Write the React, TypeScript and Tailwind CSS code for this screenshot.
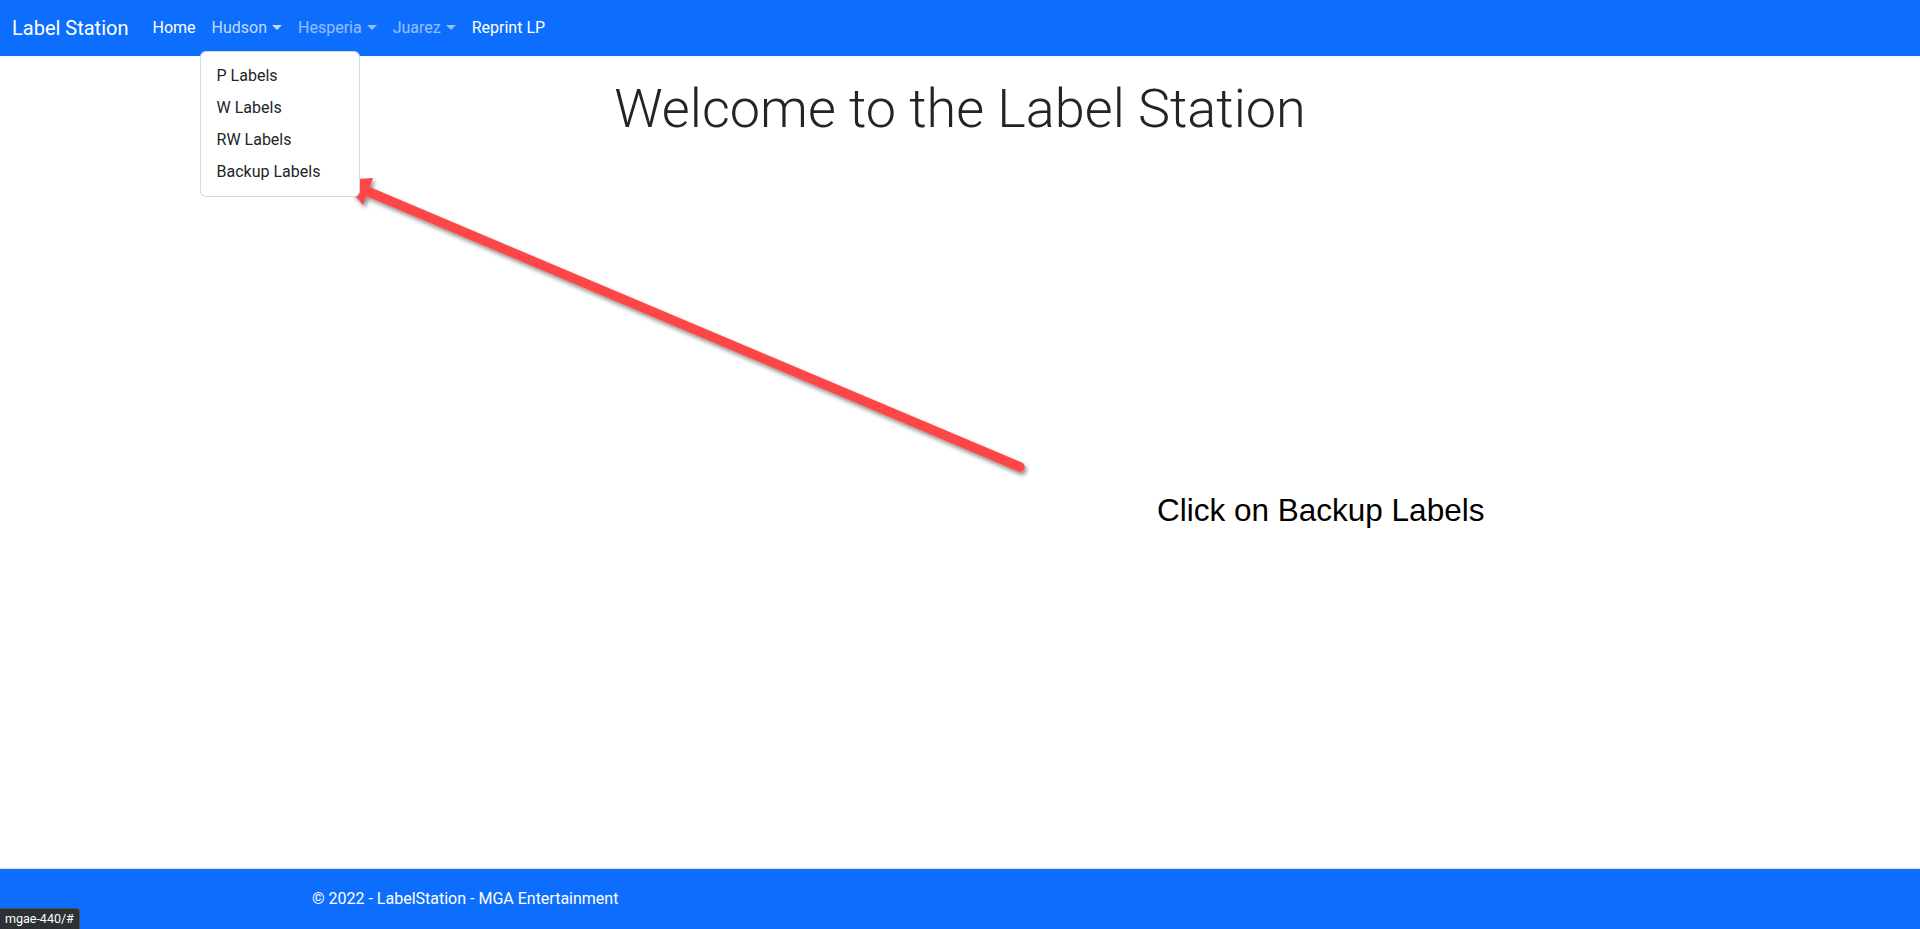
export default function App() {
  return (
    <div className="relative flex h-[929px] flex-col overflow-hidden bg-white font-[Roboto,sans-serif]">
      <header className="mb-4">
        <nav className="flex h-[56px] items-center bg-[#0d6efd] px-3">
          <span className="mr-4 text-[20px] leading-[30px] text-white">Label Station</span>
          <ul className="flex items-center text-[16px] leading-6">
            <li className="px-2 py-2 text-white">Home</li>
            <li className="relative px-2 py-2 text-white/75">
              Hudson
              <span className="ml-[5px] inline-block h-0 w-0 border-x-[5.5px] border-t-[5.5px] border-x-transparent border-t-current align-[3px]"></span>
              <div className="absolute left-[-4px] top-[43px] z-10 w-[160px] rounded-md border border-black/15 bg-white py-2 text-[#212529]">
                <div className="px-4 py-1">P Labels</div>
                <div className="px-4 py-1">W Labels</div>
                <div className="px-4 py-1">RW Labels</div>
                <div className="px-4 py-1">Backup Labels</div>
              </div>
            </li>
            <li className="px-2 py-2 text-white/55">
              Hesperia
              <span className="ml-[5px] inline-block h-0 w-0 border-x-[5.5px] border-t-[5.5px] border-x-transparent border-t-current align-[3px]"></span>
            </li>
            <li className="px-2 py-2 text-white/55">
              Juarez
              <span className="ml-[5px] inline-block h-0 w-0 border-x-[5.5px] border-t-[5.5px] border-x-transparent border-t-current align-[3px]"></span>
            </li>
            <li className="px-2 py-2 text-white">Reprint LP</li>
          </ul>
        </nav>
      </header>

      <main className="flex-1 pt-[5px] text-center">
        <h1 className="text-[54px] font-light leading-[1.2] text-[#212529]">Welcome to the Label Station</h1>
      </main>

      <footer className="h-[61px] border-t border-[#dee2e6] bg-[#0d6efd] text-white">
        <div className="mx-auto max-w-[1320px] px-3 text-[16px] leading-[60px]">© 2022 - LabelStation - MGA Entertainment</div>
      </footer>

      <svg className="pointer-events-none absolute left-0 top-0" width="1920" height="929" viewBox="0 0 1920 929">
        <defs>
          <filter id="sh" x="-10%" y="-10%" width="120%" height="130%">
            <feDropShadow dx="2" dy="3" stdDeviation="2" floodColor="#000" floodOpacity="0.45" />
          </filter>
        </defs>
        <g filter="url(#sh)">
          <line x1="1020" y1="467" x2="362" y2="189" stroke="#fd4747" strokeWidth="9.5" strokeLinecap="round" />
          <polygon points="342,180 373,178 363,205" fill="#fd4747" />
        </g>
      </svg>

      <div className="absolute left-[1157px] top-[495px] font-['Liberation_Sans',Arial,sans-serif] text-[31.5px] leading-none text-black">
        Click on Backup Labels
      </div>

      <div className="absolute bottom-0 left-0 rounded-tr-[4px] border-r border-t border-[#4b4f53] bg-[#2d3134] px-[5px] text-[12.5px] leading-[20px] text-white">
        mgae-440/#
      </div>
    </div>
  );
}
